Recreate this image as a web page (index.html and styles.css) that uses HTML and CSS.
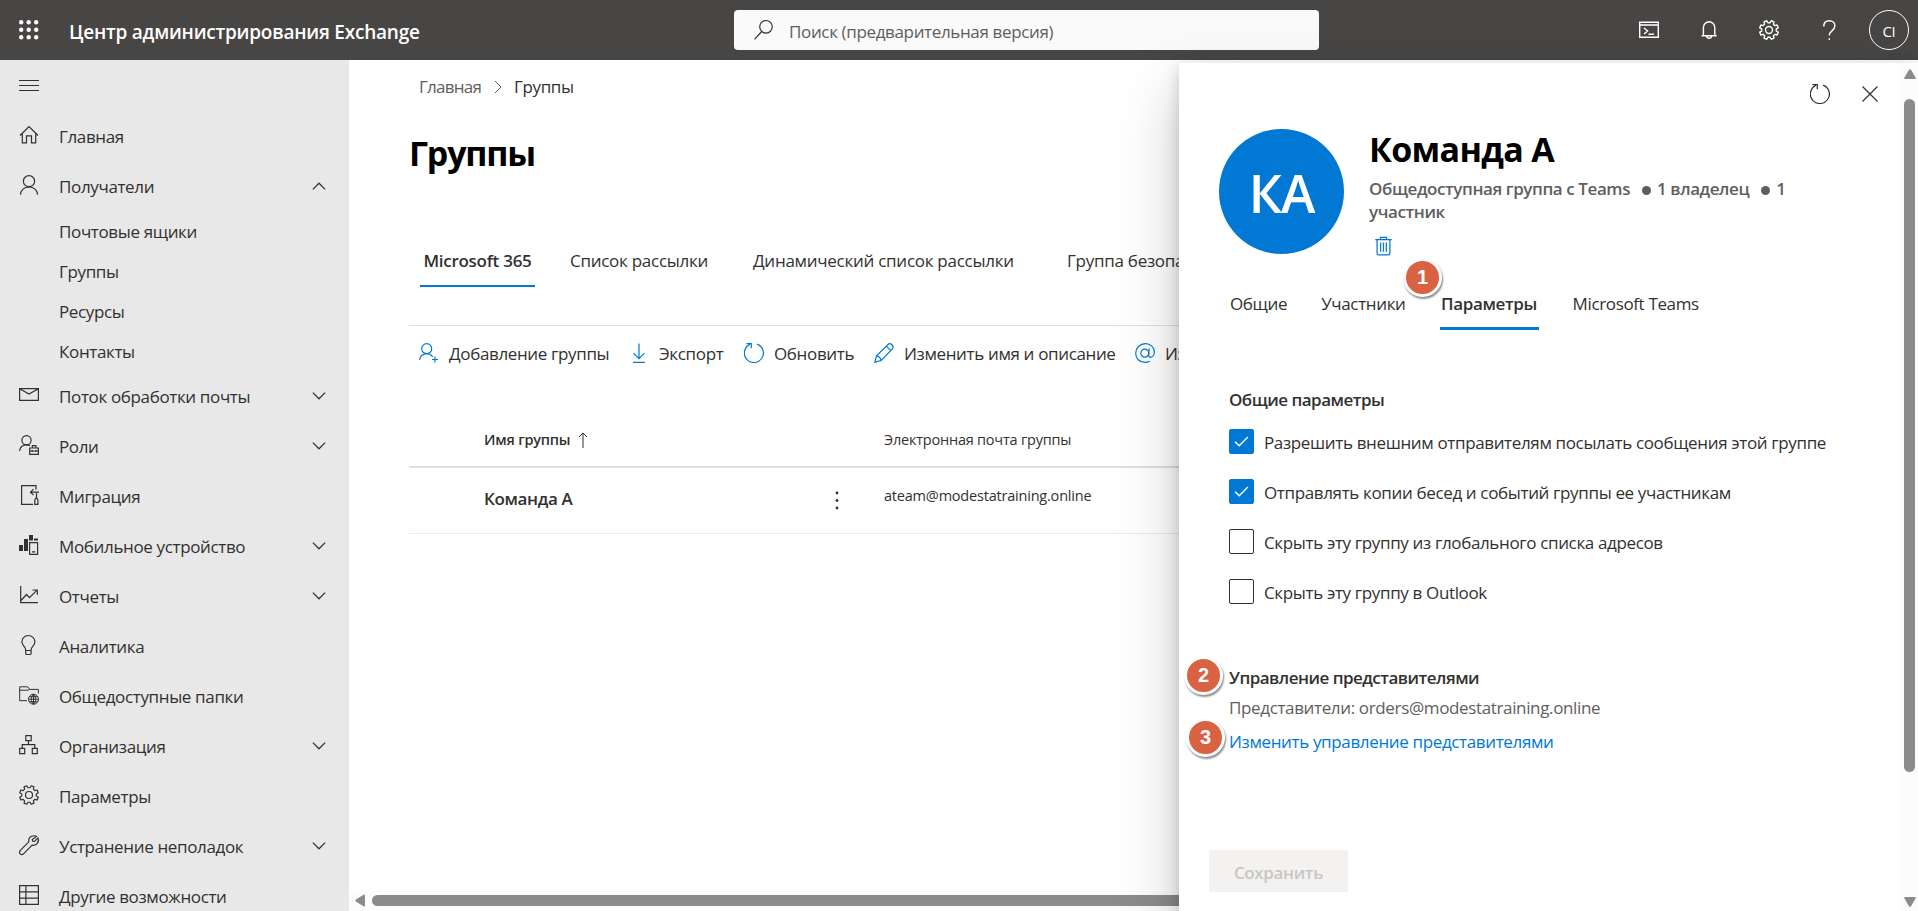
FILE: index.html
```
<!DOCTYPE html>
<html lang="ru">
<head>
  <meta charset="UTF-8" />
  <meta name="viewport" content="width=device-width, initial-scale=1.0" />
  <title>Группы - Центр администрирования Exchange</title>
  <link rel="stylesheet" href="styles.css">
</head>
<body>

  <!-- shared icons -->
  <svg class="sprite">
    <symbol id="i-down" viewBox="0 0 16 16"><path d="M1 4.2l7 7 7-7"/></symbol>
    <symbol id="i-refresh" viewBox="0 0 20 20"><path d="M13.1 1.1A9.5 9.5 0 1 1 5.9 1.4M2.4 .6h4.9v4.6"/></symbol>
    <symbol id="i-gear" viewBox="0 0 20 20"><g transform="rotate(22.5 10 10)"><path d="M8.5 .6h3l.3 2.3 2 .8 1.8-1.4 2.1 2.1-1.4 1.8.8 2 2.3.3v3l-2.3.3-.8 2 1.4 1.8-2.1 2.1-1.8-1.4-2 .8-.3 2.3h-3l-.3-2.3-2-.8-1.8 1.4-2.1-2.1 1.4-1.8-.8-2-2.3-.3v-3l2.3-.3.8-2-1.4-1.8 2.1-2.1 1.8 1.4 2-.8z" stroke-linejoin="round"/></g><circle cx="10" cy="10" r="3.5"/></symbol>
  </svg>

  <header class="topbar">
    <svg class="waffle" viewBox="0 0 20 20">
      <circle cx="2.2" cy="2.2" r="2.2"/><circle cx="9.7" cy="2.2" r="2.2"/><circle cx="17.2" cy="2.2" r="2.2"/>
      <circle cx="2.2" cy="9.7" r="2.2"/><circle cx="9.7" cy="9.7" r="2.2"/><circle cx="17.2" cy="9.7" r="2.2"/>
      <circle cx="2.2" cy="17.2" r="2.2"/><circle cx="9.7" cy="17.2" r="2.2"/><circle cx="17.2" cy="17.2" r="2.2"/>
    </svg>
    <span class="app-name">Центр администрирования Exchange</span>
    <div class="search">
      <svg class="icon" viewBox="0 0 20 20"><ellipse cx="11" cy="6.800" rx="6.300" ry="6.300"/><path d="M6.700 11.500L-.5 19.400"/></svg>
      <span>Поиск (предварительная версия)</span>
    </div>
    <div class="top-actions">
      <svg class="icon thick" viewBox="0 0 20 20"><path d="M0 2.200h20M.7 2v15.200h18.600V2M.7 5h18.600M5 8l3.600 3L5 14M9.500 14.300h5.500"/></svg>
      <svg class="icon thick" viewBox="0 0 20 20"><path d="M2.500 15.800h15.200M4.400 15.800V7.600a5.700 5.900 0 0 1 11.400 0v8.200M7.800 16a2.300 2.300 0 0 0 4.600 0"/></svg>
      <svg class="icon thick"><use href="#i-gear"/></svg>
      <svg class="icon thick" viewBox="0 0 20 20"><path d="M4.800 6.400C4.800 2.700 7 .7 10.200.7s5.700 2 5.700 5c0 2.600-1.400 3.800-3 5.200-1.700 1.400-2.600 2.400-2.600 4.700M10.300 18.200v1.700"/></svg>
      <span class="avatar-small">CI</span>
    </div>
  </header>

  <div class="layout">
    <nav class="sidebar">
      <div class="burger"><svg class="icon" viewBox="0 0 20 20"><path d="M0 4.500h20M0 9.500h20M0 14.500h20"/></svg></div>
      <a class="nav-item">
        <svg class="icon" viewBox="0 0 20 20"><path d="M1 10.500l9-9 9 9M3.300 8.500v9.300h4.200v-7h5v7h4.200V8.500"/></svg>
        <span>Главная</span>
      </a>
      <a class="nav-item">
        <svg class="icon" viewBox="0 0 20 20"><circle cx="10" cy="6.200" r="5.600"/><path d="M1.500 19.800a8.500 8 0 0 1 17 0"/></svg>
        <span>Получатели</span>
        <svg class="chev up"><use href="#i-down"/></svg>
      </a>
      <a class="nav-sub">Почтовые ящики</a>
      <a class="nav-sub">Группы</a>
      <a class="nav-sub">Ресурсы</a>
      <a class="nav-sub">Контакты</a>
      <a class="nav-item">
        <svg class="icon" viewBox="0 0 20 20"><path d="M.6 3.600h18.800v11.800H.6zM.6 3.800L10 9l9.400-5.200"/></svg>
        <span>Поток обработки почты</span>
        <svg class="chev"><use href="#i-down"/></svg>
      </a>
      <a class="nav-item">
        <svg class="icon" viewBox="0 0 20 20"><circle cx="7.500" cy="5.200" r="4.600"/><path d="M.6 16c.4-3.800 3-6.200 6.900-6.200 1.500 0 2.500.4 3.500 1M10.700 13h8.700v6.400h-8.700zM10.700 16h8.700M13.300 13v-2.300h3.600V13M13.200 15v2M17 15v2"/></svg>
        <span>Роли</span>
        <svg class="chev"><use href="#i-down"/></svg>
      </a>
      <a class="nav-item">
        <svg class="icon" viewBox="0 0 20 20"><path d="M17 4.500V.7H2.600v18.700H14M20 7.200h-8.500M14.500 4.200l-3 3 3 3M17.500 8v5M15.800 19.400v-4.500l1.600-2.500 1.500 2.500v4.500z"/></svg>
        <span>Миграция</span>
      </a>
      <a class="nav-item">
        <svg class="icon" viewBox="0 0 20 20"><path class="solid" d="M0 10h4v6H0zM5 4h4v12H5zM10 0h4v5.500h-4zM15 3.500h4v2h-4z"/><path d="M10.600 7.700h8v11.700h-8zM13 16.800h3.200"/></svg>
        <span>Мобильное устройство</span>
        <svg class="chev"><use href="#i-down"/></svg>
      </a>
      <a class="nav-item">
        <svg class="icon" viewBox="0 0 20 20"><path d="M1.700 1v16.700H19M2 15.500l5.500-6 3 3.200L18 5.200M13.500 5h4.800v4.800"/></svg>
        <span>Отчеты</span>
        <svg class="chev"><use href="#i-down"/></svg>
      </a>
      <a class="nav-item">
        <svg class="icon" viewBox="0 0 20 20"><path d="M6.700 15.200c0-3.800-3.800-4.200-3.800-8.400a6.500 6.300 0 0 1 13 0c0 4.200-3.800 4.600-3.800 8.400v3c0 .8-.5 1.300-1.300 1.300H8c-.8 0-1.300-.5-1.300-1.300zM6.700 15.500h5.400"/></svg>
        <span>Аналитика</span>
      </a>
      <a class="nav-item">
        <svg class="icon thin" viewBox="0 0 20 20"><path d="M8 15.700H.7V1.800h8l2 2.600h8.700v4M.7 5.200h8.500l1.500-.9"/><circle cx="14.500" cy="14.200" r="5"/><path d="M9.500 14.200h10M14.500 9.200v10M10.300 11.700h8.400M10.300 16.700h8.400M14.500 9.200c-3 2.500-3 7.500 0 10M14.500 9.200c3 2.500 3 7.500 0 10"/></svg>
        <span>Общедоступные папки</span>
      </a>
      <a class="nav-item">
        <svg class="icon" viewBox="0 0 20 20"><path d="M6.800.7h5.400v5H6.800zM.7 13.400h5v5.200h-5zM13.300 13.400h5v5.200h-5zM9.500 5.700v4M3.200 13.400V9.700h12.600v3.700"/></svg>
        <span>Организация</span>
        <svg class="chev"><use href="#i-down"/></svg>
      </a>
      <a class="nav-item">
        <svg class="icon"><use href="#i-gear"/></svg>
        <span>Параметры</span>
      </a>
      <a class="nav-item">
        <svg class="icon" viewBox="0 0 20 20"><path d="M17.700 1.300c-3.500-1.500-8.800.4-7.900 5.600L1.300 15.400c-2.300 2.600 1 5.700 3.400 3.300l8.400-8.500c5 .9 7.300-4 5.900-7.400l-3.500 3.600-1.900-.3-.3-1.700z" stroke-linejoin="round"/></svg>
        <span>Устранение неполадок</span>
        <svg class="chev"><use href="#i-down"/></svg>
      </a>
      <a class="nav-item">
        <svg class="icon" viewBox="0 0 20 20"><path d="M.6.6h18.800v18.800H.6zM.6 6.900h18.800M.6 13.200h18.800M6.900.6v18.800"/></svg>
        <span>Другие возможности</span>
      </a>
    </nav>

    <main class="content">
      <div class="breadcrumb">
        <span class="crumb">Главная</span>
        <svg class="crumb-sep" viewBox="0 0 8 14"><path d="M1 1l6 6-6 6"/></svg>
        <span>Группы</span>
      </div>
      <h1>Группы</h1>

      <div class="tabs">
        <span class="tab active">Microsoft 365</span>
        <span class="tab">Список рассылки</span>
        <span class="tab">Динамический список рассылки</span>
        <span class="tab">Группа безопасности</span>
      </div>

      <div class="toolbar">
        <span class="cmd cmd-add"><svg class="icon" viewBox="0 0 20 20"><circle cx="7.700" cy="5.700" r="5"/><path d="M.6 17a7.200 6.600 0 0 1 7.100-6.300c2.600 0 4.600 1.200 6 3.300M16 13.500v6M13 16.500h6"/></svg>Добавление группы</span>
        <span class="cmd cmd-export"><svg class="icon" viewBox="0 0 20 20"><path d="M10 .5v15M4.500 10.200L10 15.700l5.500-5.500M4 19.300h12"/></svg>Экспорт</span>
        <span class="cmd cmd-refresh"><svg class="icon"><use href="#i-refresh"/></svg>Обновить</span>
        <span class="cmd cmd-edit"><svg class="icon" viewBox="0 0 20 20"><path d="M.8 19.200l1.700-6.400L14 1.500c2.500-2.200 6.500 1.400 4.400 4.300L7.200 17.500zM12.300 3.200l4.500 4.500M2.500 12.800c2.500.3 4 2 4.700 4.700"/></svg>Изменить имя и описание</span>
        <span class="cmd cmd-mail"><svg class="icon" viewBox="0 0 20 20"><circle cx="9.800" cy="10.200" r="4"/><path d="M14.200 5.500l-.6 5.800c-.2 2 .7 3 2 3 2.200 0 3.800-2.400 3.800-5.200C19.400 4.300 15.500.7 10.500.7 4.800.7.700 4.900.7 10.300c0 5.200 3.700 9 9.100 9 2 0 3.500-.3 5-1.100"/></svg>Изменить адрес</span>
      </div>

      <div class="grid">
        <div class="grid-head">
          <span class="col-name">Имя группы <svg class="sort" viewBox="0 0 10 16"><path d="M5 16V1M1 5l4-4 4 4"/></svg></span>
          <span>Электронная почта группы</span>
        </div>
        <div class="grid-row">
          <span class="col-name">Команда А</span>
          <svg class="dots" viewBox="0 0 4 20"><circle cx="2" cy="2" r="1.400"/><circle cx="2" cy="9.500" r="1.400"/><circle cx="2" cy="17" r="1.400"/></svg>
          <span class="col-mail">ateam@modestatraining.online</span>
        </div>
      </div>

      <div class="hscroll">
        <svg viewBox="0 0 10 13"><path d="M10 1.500v10Q10 13 8.500 12.300L.8 7.500Q-.2 6.500.8 5.500L8.500.7Q10 0 10 1.500z"/></svg>
        <div class="hthumb"></div>
      </div>
    </main>
  </div>

  <aside class="panel">
    <div class="panel-body">
      <div class="panel-actions">
        <svg class="icon"><use href="#i-refresh"/></svg>
        <svg class="icon" viewBox="0 0 20 20"><path d="M2.500 2.500l15 15M17.500 2.500l-15 15"/></svg>
      </div>

      <div class="group-head">
        <div class="avatar">КА</div>
        <div class="group-info">
          <h2>Команда А</h2>
          <p>Общедоступная группа с Teams<i class="dot"></i>1 владелец<i class="dot"></i>1 участник</p>
          <svg class="trash" viewBox="0 0 18 20"><path d="M.3 3.200h17.400M5.800 3V.8h6.400V3M2.200 3.200v14.600c0 .9.600 1.500 1.500 1.500h10.600c.9 0 1.500-.6 1.500-1.500V3.200M6 6.200V16M9 6.200V16M12 6.200V16"/></svg>
        </div>
      </div>

      <div class="panel-tabs">
        <span class="ptab">Общие</span>
        <span class="ptab">Участники</span>
        <span class="ptab active">Параметры</span>
        <span class="ptab">Microsoft Teams</span>
      </div>

      <section class="settings">
        <h3>Общие параметры</h3>
        <label class="check on"><span class="box"><svg viewBox="0 0 16 12"><path d="M1 6.200l4.500 4.500L15 1.200"/></svg></span>Разрешить внешним отправителям посылать сообщения этой группе</label>
        <label class="check on"><span class="box"><svg viewBox="0 0 16 12"><path d="M1 6.200l4.500 4.500L15 1.200"/></svg></span>Отправлять копии бесед и событий группы ее участникам</label>
        <label class="check"><span class="box"></span>Скрыть эту группу из глобального списка адресов</label>
        <label class="check"><span class="box"></span>Скрыть эту группу в Outlook</label>
      </section>

      <section class="delegates">
        <h3>Управление представителями</h3>
        <p>Представители: orders@modestatraining.online</p>
        <a class="link">Изменить управление представителями</a>
      </section>

      <button class="save" disabled>Сохранить</button>
    </div>

    <div class="vscroll">
      <svg viewBox="0 0 12 10"><path d="M1.200 10h9.600Q12.200 10 11.600 8.500L7 .8Q6-.2 5 .8L.4 8.500Q-.2 10 1.200 10z"/></svg>
      <div class="vthumb"></div>
      <svg class="flip" viewBox="0 0 12 10"><path d="M1.200 10h9.600Q12.200 10 11.600 8.500L7 .8Q6-.2 5 .8L.4 8.500Q-.2 10 1.200 10z"/></svg>
    </div>

    <span class="step step-1">1</span>
    <span class="step step-2">2</span>
    <span class="step step-3">3</span>
  </aside>

</body>
</html>
```
FILE: styles.css
```
* {
  box-sizing: border-box;
}

body {
  margin: 0;
  width: 100%;
  height: 100vh;
  overflow: hidden;
  position: relative;
  display: flex;
  flex-direction: column;
  background: #fff;
  color: #323130;
  font-family: "Open Sans", "Noto Sans", sans-serif;
  font-size: 17px;
  line-height: 24px;
  letter-spacing: -0.021em;
  white-space: nowrap;
}

h1, h2, h3, p {
  margin: 0;
}

svg {
  flex: none;
  fill: none;
  stroke: currentColor;
  overflow: visible;
}

.sprite {
  position: absolute;
  width: 0;
  height: 0;
}

.icon {
  width: 20px;
  height: 20px;
  stroke-width: 1.2;
}

.thick {
  stroke-width: 1.4;
}

.thin {
  stroke-width: 1;
}

.solid {
  fill: currentColor;
  stroke: none;
}

/* top bar */
.topbar {
  display: flex;
  align-items: center;
  height: 60px;
  flex: none;
  background: #484644;
  color: #fff;
  padding: 0 9px 0 19px;
}

.waffle {
  width: 20px;
  height: 20px;
  fill: #fff;
  stroke: none;
}

.app-name {
  width: 665px;
  margin-left: 30px;
  padding-top: 3px;
  font-size: 19px;
  font-weight: 600;
  letter-spacing: -0.012em;
}

.search {
  display: flex;
  align-items: center;
  gap: 14px;
  width: 585px;
  height: 40px;
  padding: 3px 0 0 21px;
  border-radius: 4px;
  background: #fafafa;
  color: #605e5c;
}

.search .icon {
  margin-bottom: 3px;
  color: #323130;
}

.top-actions {
  display: flex;
  align-items: center;
  gap: 40px;
  margin-left: auto;
}

.avatar-small {
  width: 40px;
  height: 40px;
  margin-left: -10px;
  border: 1px solid #fff;
  border-radius: 50%;
  font-size: 15px;
  line-height: 40px;
  text-align: center;
}

.layout {
  display: flex;
  flex: 1;
  min-height: 0;
}

/* left navigation */
.sidebar {
  width: 349px;
  flex: none;
  overflow: hidden;
  background: #e8e8e8;
}

.burger {
  height: 51px;
  padding: 16px 19px;
}

.nav-item {
  display: flex;
  align-items: center;
  height: 50px;
  padding: 0 23px 0 19px;
}

.nav-item span {
  margin-left: 20px;
  padding-top: 2px;
}

.nav-item .icon {
  margin-bottom: 2px;
}

.nav-sub {
  display: block;
  height: 40px;
  padding-left: 59px;
  line-height: 42px;
}

.chev {
  width: 14px;
  height: 14px;
  margin-left: auto;
  stroke-width: 1.4;
}

.up {
  transform: rotate(180deg);
}

/* groups page */
.content {
  flex: 1;
  min-width: 0;
  display: flex;
  flex-direction: column;
  overflow: hidden;
}

.breadcrumb {
  display: flex;
  align-items: center;
  height: 53px;
  padding-left: 70px;
}

.crumb {
  width: 74px;
  color: #605e5c;
  letter-spacing: -0.045em;
}

.crumb-sep {
  width: 8px;
  height: 14px;
  margin: 0 12px 0 1px;
  color: #605e5c;
}

h1 {
  margin: 20px 0 0 60px;
  color: #000;
  font-size: 34px;
  line-height: 40px;
  font-weight: 700;
  letter-spacing: -0.036em;
}

.tabs {
  display: flex;
  height: 53px;
  line-height: 53px;
  margin: 61px 0 0 71px;
}

.tab {
  width: 183px;
  flex: none;
  letter-spacing: -0.016em;
}

.tab:nth-child(3) {
  width: 314px;
}

.tab.active {
  width: 115px;
  margin-right: 35px;
  text-align: center;
  font-weight: 600;
  box-shadow: inset 0 -2px #0078d4;
}

.toolbar {
  display: flex;
  align-items: center;
  height: 56px;
  margin: 38px 0 0 60px;
  padding-left: 10px;
  border-top: 1px solid #e1dfdd;
}

.cmd {
  display: flex;
  flex: none;
  align-items: center;
  gap: 10px;
}

.cmd-add {
  width: 210px;
}

.cmd-export {
  width: 115px;
}

.cmd-refresh {
  width: 130px;
}

.cmd-edit {
  width: 261px;
}

.cmd .icon {
  margin-bottom: 2px;
  color: #0078d4;
}

.grid {
  margin: 31px 0 0 60px;
}

.grid-head {
  display: flex;
  align-items: center;
  height: 56px;
  padding: 1px 0 0 75px;
  border-bottom: 2px solid #e1dfdd;
  font-size: 14.5px;
  letter-spacing: -0.015em;
}

.col-name {
  width: 400px;
  font-weight: 600;
}

.sort {
  width: 10px;
  height: 16px;
  margin-left: 4px;
  vertical-align: -3px;
}

.grid-row {
  display: flex;
  height: 66px;
  padding: 19px 0 0 75px;
  border-bottom: 1px solid #edebe9;
}

.grid-row .col-name {
  width: 351px;
}

.dots {
  width: 4px;
  height: 20px;
  margin: 4px 45px 0 0;
  fill: currentColor;
  stroke: none;
}

.col-mail {
  font-size: 14.5px;
  line-height: 17px;
  letter-spacing: -0.014em;
}

.hscroll {
  display: flex;
  align-items: center;
  height: 20px;
  margin-top: auto;
  padding: 0 0 1px 6px;
  gap: 7px;
  background: #fcfcfc;
}

.hscroll svg {
  width: 10px;
  height: 13px;
  fill: #8b8b8b;
  stroke: none;
}

.hthumb {
  flex: 1;
  height: 11px;
  border-radius: 6px 0 0 6px;
  background: #8b8b8b;
}

/* details panel */
.panel {
  position: absolute;
  top: 63px;
  right: 0;
  display: flex;
  width: 739px;
  height: 848px;
  background: #fff;
  box-shadow: 0 26px 58px rgba(0, 0, 0, 0.22), 0 5px 14px rgba(0, 0, 0, 0.18);
}

.panel-body {
  flex: 1;
  display: flex;
  flex-direction: column;
}

.panel-actions {
  display: flex;
  justify-content: flex-end;
  align-items: center;
  gap: 30px;
  height: 62px;
  padding-right: 20px;
}

.group-head {
  display: flex;
  padding: 4px 20px 0 40px;
  gap: 25px;
}

.avatar {
  width: 125px;
  height: 125px;
  flex: none;
  padding-top: 1px;
  border-radius: 50%;
  background: #0078d4;
  color: #fff;
  font-size: 52px;
  line-height: 125px;
  font-weight: 600;
  letter-spacing: -0.02em;
  text-align: center;
}

h2 {
  color: #000;
  font-size: 34px;
  line-height: 40px;
  letter-spacing: -0.02em;
}

.group-info p {
  width: 430px;
  margin-top: 8px;
  color: #605e5c;
  font-weight: 600;
  line-height: 23px;
  letter-spacing: -0.024em;
  white-space: normal;
}

.dot {
  display: inline-block;
  width: 9px;
  height: 9px;
  margin: 0 6px 0 12px;
  border-radius: 50%;
  background: #605e5c;
}

.trash {
  display: block;
  width: 17px;
  height: 20px;
  margin: 13px 0 0 6px;
  color: #0078d4;
  stroke-width: 1.3;
}

.panel-tabs {
  display: flex;
  height: 53px;
  line-height: 53px;
  margin: 21px 0 0 51px;
}

.ptab {
  margin-right: 34px;
}

.ptab.active {
  width: 99px;
  text-align: center;
  font-weight: 600;
  box-shadow: inset 0 -3px #0078d4;
}

h3 {
  font-size: 17px;
  line-height: 24px;
  font-weight: 600;
  letter-spacing: -0.03em;
}

.settings {
  margin: 58px 0 0 50px;
}

.settings h3 {
  margin-bottom: 5px;
}

.check {
  display: flex;
  align-items: center;
  gap: 10px;
  height: 50px;
  padding-top: 1px;
}

.box {
  display: flex;
  align-items: center;
  justify-content: center;
  width: 25px;
  height: 25px;
  margin-bottom: 2px;
  border: 1px solid #323130;
  border-radius: 2px;
}

.on .box {
  border-color: #0078d4;
  background: #0078d4;
  color: #fff;
}

.box svg {
  width: 15px;
  height: 11px;
  stroke-width: 1.5;
}

.delegates {
  margin: 49px 0 0 50px;
}

.delegates p {
  margin: 6px 0 10px;
  color: #605e5c;
}

.link {
  color: #0078d4;
}

.save {
  width: 139px;
  height: 42px;
  margin: auto 0 19px 30px;
  padding: 3px 0 0;
  border: none;
  border-radius: 2px;
  background: #f3f2f1;
  color: #c8c6c4;
  font: inherit;
  font-weight: 600;
  letter-spacing: -0.021em;
}

.vscroll {
  display: flex;
  flex-direction: column;
  align-items: center;
  width: 18px;
  padding: 6px 1px 4px 2px;
  background: #fcfcfc;
}

.vscroll svg {
  width: 12px;
  height: 10px;
  fill: #8b8b8b;
  stroke: none;
}

.vscroll .flip {
  margin-top: auto;
  transform: rotate(180deg);
}

.vthumb {
  width: 11px;
  height: 673px;
  margin-top: 20px;
  border-radius: 6px;
  background: #8b8b8b;
}

/* numbered callouts over the panel */
.step {
  position: absolute;
  width: 39px;
  height: 39px;
  border: 3px solid #fff;
  border-radius: 50%;
  background: #d96243;
  box-shadow: 1px 2px 2px rgba(0, 0, 0, 0.45);
  color: #fff;
  font: bold 20px/33px "Liberation Sans", Arial, sans-serif;
  text-align: center;
}

.step-1 {
  left: 224px;
  top: 195px;
}

.step-2 {
  left: 5px;
  top: 593px;
}

.step-3 {
  left: 7px;
  top: 655px;
}
```
